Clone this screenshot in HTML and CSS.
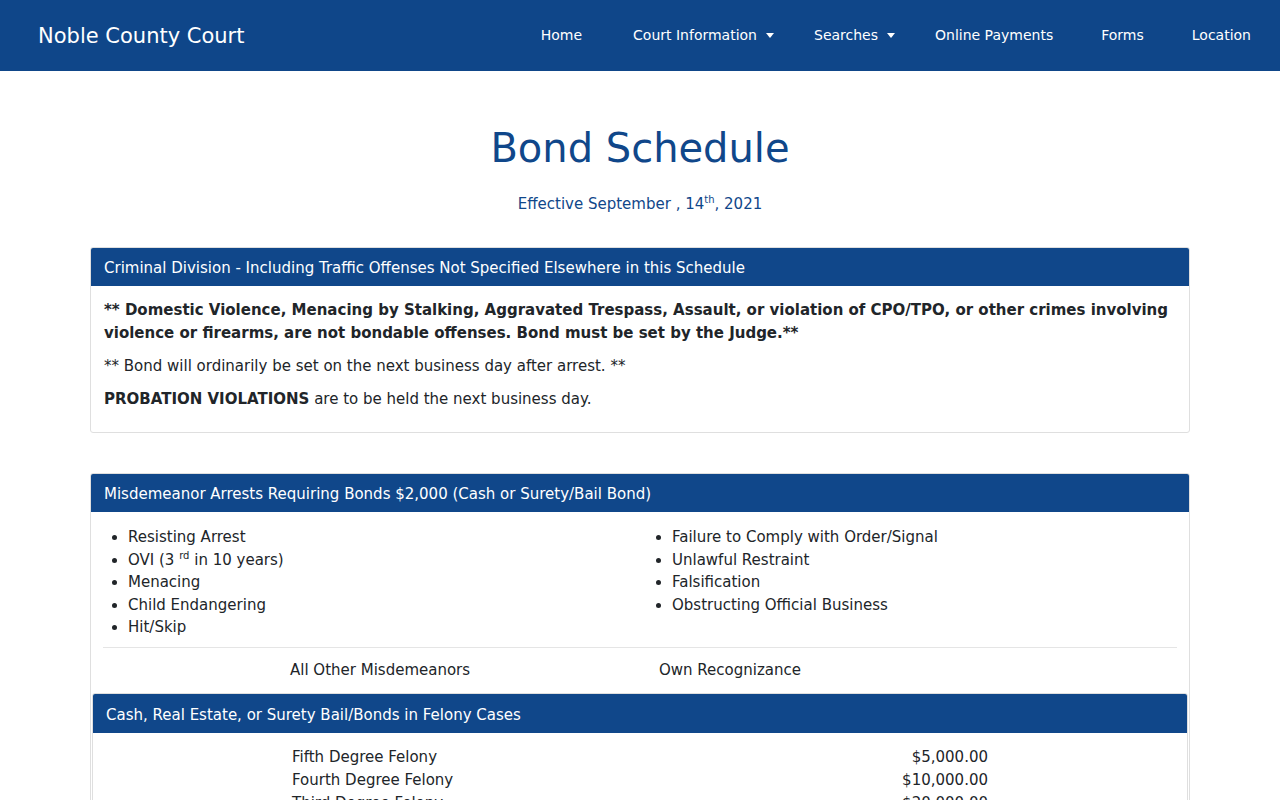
FILE: index.html
```html
<!DOCTYPE html>
<html lang="en">
<head>
<meta charset="utf-8">
<title>Bond Schedule - Noble County Court</title>
<link rel="stylesheet" href="styles.css">
</head>
<body>
<header class="navbar">
  <a class="brand" href="#">Noble County Court</a>
  <nav class="nav">
    <a class="nav-link" href="#">Home</a>
    <a class="nav-link dropdown" href="#">Court Information</a>
    <a class="nav-link dropdown" href="#">Searches</a>
    <a class="nav-link" href="#">Online Payments</a>
    <a class="nav-link" href="#">Forms</a>
    <a class="nav-link" href="#">Location</a>
  </nav>
</header>

<main class="container">
  <h1 class="page-title">Bond Schedule</h1>
  <p class="effective">Effective September , 14<sup>th</sup>, 2021</p>

  <section class="card card-first">
    <div class="card-header">Criminal Division - Including Traffic Offenses Not Specified Elsewhere in this Schedule</div>
    <div class="card-body">
      <p><strong>** Domestic Violence, Menacing by Stalking, Aggravated Trespass, Assault, or violation of CPO/TPO, or other crimes involving violence or firearms, are not bondable offenses. Bond must be set by the Judge.**</strong></p>
      <p>** Bond will ordinarily be set on the next business day after arrest. **</p>
      <p><strong>PROBATION VIOLATIONS</strong> are to be held the next business day.</p>
    </div>
  </section>

  <section class="card card-spaced">
    <div class="card-header">Misdemeanor Arrests Requiring Bonds $2,000 (Cash or Surety/Bail Bond)</div>
    <div class="card-body list-body">
      <div class="offense-cols">
        <ul class="offenses">
          <li>Resisting Arrest</li>
          <li>OVI (3 <sup>rd</sup> in 10 years)</li>
          <li>Menacing</li>
          <li>Child Endangering</li>
          <li>Hit/Skip</li>
        </ul>
        <ul class="offenses">
          <li>Failure to Comply with Order/Signal</li>
          <li>Unlawful Restraint</li>
          <li>Falsification</li>
          <li>Obstructing Official Business</li>
        </ul>
      </div>
      <hr class="divider">
      <div class="other-row">
        <span>All Other Misdemeanors</span>
        <span>Own Recognizance</span>
      </div>
    </div>

    <section class="card nested">
      <div class="card-header">Cash, Real Estate, or Surety Bail/Bonds in Felony Cases</div>
      <div class="card-body felony-body">
        <div class="bond-row"><span>Fifth Degree Felony</span><span>$5,000.00</span></div>
        <div class="bond-row"><span>Fourth Degree Felony</span><span>$10,000.00</span></div>
        <div class="bond-row"><span>Third Degree Felony</span><span>$20,000.00</span></div>
        <div class="bond-row"><span>Second Degree Felony</span><span>$50,000.00</span></div>
        <div class="bond-row"><span>First Degree Felony</span><span>$100,000.00</span></div>
      </div>
    </section>
  </section>
</main>
</body>
</html>
```

FILE: styles.css
```css
* {
  box-sizing: border-box;
}

html,
body {
  margin: 0;
  padding: 0;
}

body {
  font-family: "DejaVu Sans", Verdana, sans-serif;
  font-size: 15px;
  line-height: 1.5;
  color: #212529;
  background: #fff;
}

a {
  text-decoration: none;
}

/* top navigation bar */
.navbar {
  height: 71px;
  background: #0f4689;
  display: flex;
  align-items: center;
  justify-content: space-between;
  padding: 0 29px 0 38px;
}

.brand {
  color: #fff;
  font-size: 21px;
  line-height: 1;
  padding-top: 1px;
}

.nav {
  display: flex;
  align-items: center;
}

.nav-link {
  color: #fff;
  font-size: 14px;
  padding: 0 24px;
  display: flex;
  align-items: center;
}

.nav-link:first-child {
  padding-right: 27px;
}

.nav-link.dropdown {
  padding-right: 16px;
}

.nav-link:last-child {
  padding-right: 0;
}

.dropdown::after {
  content: "";
  display: inline-block;
  margin-left: 9px;
  border-top: 5px solid #fff;
  border-left: 4px solid transparent;
  border-right: 4px solid transparent;
}

/* page body */
.container {
  width: 1100px;
  margin: 0 auto;
  padding-bottom: 40px;
}

.page-title {
  margin: 52px 0 0;
  text-align: center;
  font-weight: 400;
  font-size: 40px;
  line-height: 50px;
  color: #10478a;
}

.effective {
  margin: 20px 0 0;
  text-align: center;
  color: #10478a;
  font-size: 15px;
  line-height: 22px;
}

sup {
  font-size: 10px;
  line-height: 0;
  vertical-align: 6px;
}

/* cards */
.card {
  border: 1px solid #dfdfdf;
  border-radius: 3px;
  overflow: hidden;
}

.card-first {
  margin-top: 32px;
}

.card-spaced {
  margin-top: 40px;
}

.card-header {
  background: #10478a;
  color: #fff;
  padding: 10px 13px 7px;
  line-height: 21px;
}

.card-body {
  padding: 13px 13px 11px;
}

.card-body p {
  margin: 0 0 10px;
  line-height: 23px;
}

/* misdemeanor lists */
.list-body {
  padding: 14px 12px 0;
}

.offense-cols {
  display: grid;
  grid-template-columns: 544px 1fr;
}

.offenses {
  margin: 0;
  padding-left: 25px;
  line-height: 22.5px;
}

.divider {
  border: 0;
  border-top: 1px solid #e5e5e5;
  margin: 8px 0 0;
}

.other-row {
  display: grid;
  grid-template-columns: 369px 1fr;
  padding: 11px 0 11px 187px;
  line-height: 23px;
}

/* felony bond amounts */
.nested {
  margin: 0 1px;
}

.nested .card-header {
  padding-top: 11px;
  padding-bottom: 7px;
}

.felony-body {
  padding: 13px 199px 12px;
}

.bond-row {
  display: flex;
  justify-content: space-between;
  line-height: 23px;
}
```
